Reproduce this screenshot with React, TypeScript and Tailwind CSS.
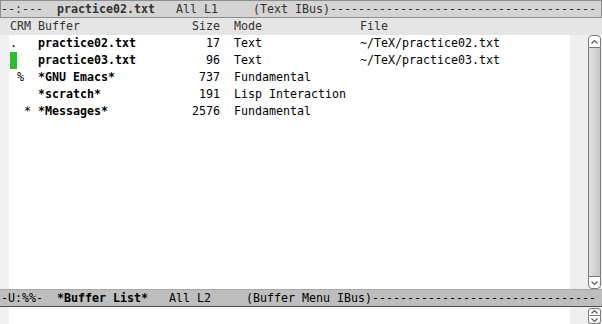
import React from "react";

const mono = { fontFamily: '"DejaVu Sans Mono", "Liberation Mono", monospace' };

const rows = [
  { flags: ".   ", name: "practice02.txt", size: "17", mode: "Text", file: "~/TeX/practice02.txt" },
  { flags: "cur", name: "practice03.txt", size: "96", mode: "Text", file: "~/TeX/practice03.txt" },
  { flags: " %  ", name: "*GNU Emacs*", size: "737", mode: "Fundamental", file: "" },
  { flags: "    ", name: "*scratch*", size: "191", mode: "Lisp Interaction", file: "" },
  { flags: "  * ", name: "*Messages*", size: "2576", mode: "Fundamental", file: "" },
];

function Chevron({ up }: { up?: boolean }) {
  return (
    <svg width="9" height="6" viewBox="0 0 9 6" className="block">
      <path d={up ? "M1.5 4.5 L4.5 1.5 L7.5 4.5" : "M1.5 1.5 L4.5 4.5 L7.5 1.5"} fill="none" stroke="#555" strokeWidth="1.1" />
    </svg>
  );
}

function ModeLine({ active, left, name, pos, mode, fill }: { active?: boolean; left: string; name: string; pos: string; mode: string; fill: number }) {
  return (
    <div
      className={
        active
          ? "h-[18px] bg-[#bebebe] border-t border-t-[#a8a8a8] border-b border-b-[#4f4f4f] text-black overflow-hidden whitespace-pre leading-[16px] text-[11.63px] pl-[1px]"
          : "h-[18px] bg-[#d4d4d4] border border-[#8e8e8e] text-[#333] overflow-hidden whitespace-pre leading-[16px] text-[11.63px]"
      }
      style={mono}
    >
      {left}
      <span className="font-bold">{name}</span>
      {"   " + pos + "     " + mode + "-".repeat(fill)}
    </div>
  );
}

function Row({ r }: { r: (typeof rows)[number] }) {
  return (
    <div className="h-[17px] leading-[17px] whitespace-pre text-black">
      {r.flags === "cur" ? (
        <>
          <span className="inline-block w-[7px] h-[17px] align-top bg-[#2fbd2f]" />
          {"   "}
        </>
      ) : (
        r.flags
      )}
      <span className="font-bold">{r.name.padEnd(22)}</span>
      {r.size.padStart(4) + "  " + r.mode.padEnd(18) + r.file}
    </div>
  );
}

export default function App() {
  return (
    <div className="w-[602px] h-[324px] bg-white flex flex-col overflow-hidden">
      <ModeLine left="--:---  " name="practice02.txt" pos="All L1" mode="(Text IBus)" fill={38} />

      {/* header line */}
      <div className="h-[17px] bg-[#e5e5e5] text-[#333] whitespace-pre leading-[17px] text-[11.63px] pl-[10px]" style={mono}>
        {"CRM " + "Buffer".padEnd(22) + "Size" + "  " + "Mode".padEnd(18) + "File"}
      </div>

      {/* buffer body */}
      <div className="h-[254px] flex">
        <div className="w-[9px] bg-[#f0f0f0]" />
        <div className="flex-1 pl-[1px] text-[11.63px]" style={mono}>
          {rows.map((r) => (
            <Row key={r.name} r={r} />
          ))}
        </div>
        <div className="w-[32px] bg-[#efefef] flex pl-[18px] pr-[1px]">
          <div className="w-[13px] flex flex-col">
            <div className="h-[13px] border border-[#7b7b7b] rounded-t-[4px] bg-white flex items-center justify-center">
              <Chevron up />
            </div>
            <div className="flex-1 border-x border-[#7b7b7b] bg-gradient-to-r from-[#e2e2e2] to-[#c6c6c6]" />
            <div className="h-[13px] border border-[#7b7b7b] rounded-b-[4px] bg-white flex items-center justify-center">
              <Chevron />
            </div>
          </div>
        </div>
      </div>

      <ModeLine active left="-U:%%-  " name="*Buffer List*" pos="All L2" mode="(Buffer Menu IBus)" fill={32} />

      {/* minibuffer */}
      <div className="flex-1 flex">
        <div className="w-[9px] bg-[#f0f0f0]" />
        <div className="flex-1" />
        <div className="w-[32px] bg-[#efefef] flex pl-[18px] pr-[1px] pt-[1px]">
          <div className="w-[13px] flex flex-col">
            <div className="h-[8px] border border-[#7b7b7b] rounded-t-[3px] bg-white flex items-center justify-center">
              <Chevron up />
            </div>
            <div className="h-[8px] border border-t-0 border-[#7b7b7b] rounded-b-[3px] bg-white flex items-center justify-center">
              <Chevron />
            </div>
          </div>
        </div>
      </div>
    </div>
  );
}
